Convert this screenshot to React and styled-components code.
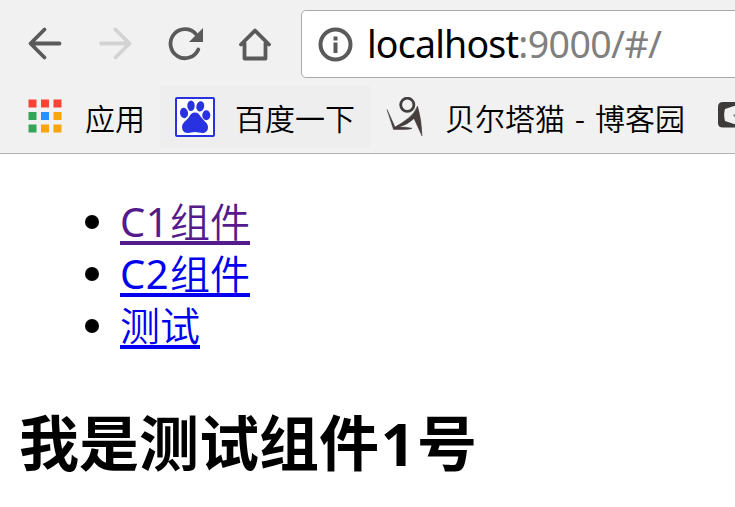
import React from "react";
import styled, { createGlobalStyle } from "styled-components";

const sans = `"Noto Sans", "Noto Sans CJK SC", sans-serif`;
const demiLight = `"Noto Sans CJK SC DemiLight", "Noto Sans CJK SC", sans-serif`;

const GlobalStyle = createGlobalStyle`
  * { box-sizing: border-box; }
  body { margin: 0; background: #fff; overflow: hidden; }
`;

const Browser = styled.div`
  width: 100%;
  height: 507px;
  overflow: hidden;
  font-family: ${sans};
  color: #000;
`;

const Chrome = styled.header`
  height: 154px;
  background: #f1f1f1;
  border-bottom: 1px solid #b6b6b6;
  overflow: hidden;
`;

const Toolbar = styled.div`
  display: flex;
  align-items: flex-start;
  height: 85px;
  padding: 10px 0 0 10px;
`;

const NavButton = styled.button`
  flex: none;
  width: 70px;
  height: 68px;
  padding: 0;
  border: 0;
  background: none;
  color: ${(p) => (p.disabled ? "#d3d3d3" : "#5a5a5a")};
  svg { display: block; }
`;

const AddressBar = styled.div`
  flex: none;
  display: flex;
  align-items: center;
  width: 460px;
  height: 68px;
  margin-left: 11px;
  padding-left: 15px;
  border: 1px solid #a9a9a9;
  border-radius: 5px;
  background: #fff;
`;

const Url = styled.div`
  margin-left: 14px;
  font-size: 37.5px;
  line-height: 66px;
  white-space: nowrap;
`;

const Host = styled.span`
  letter-spacing: -0.8px;
`;

const Path = styled.span`
  color: #808080;
  letter-spacing: -0.6px;
`;

const Bookmarks = styled.nav`
  display: flex;
  height: 63px;
`;

const Bookmark = styled.a`
  flex: none;
  display: flex;
  align-items: center;
  width: ${(p) => p.$width}px;
  height: 63px;
  padding-left: ${(p) => p.$pad || 15}px;
  background: ${(p) => (p.$active ? "#eeeeee" : "transparent")};
  svg { flex: none; }
`;

const BookmarkLabel = styled.span`
  margin-left: 20px;
  font-family: ${demiLight};
  font-size: 30px;
  font-weight: 350;
  line-height: 60px;
  white-space: pre;
`;

const Dash = styled.span`
  display: inline-block;
  width: 30px;
  text-align: center;
`;

const Page = styled.main`
  padding: 42px 20px 0 19px;
`;

const Links = styled.ul`
  margin: 0;
  padding: 0 0 0 53px;
  list-style: none;
`;

const LinkItem = styled.li`
  display: flex;
  align-items: center;
  height: 52px;
`;

const Bullet = styled.span`
  width: 14px;
  height: 14px;
  margin: 0 21px 0 13px;
  border-radius: 50%;
  background: #000;
`;

const PageLink = styled.a`
  height: 46px;
  border-bottom: 4px solid;
  color: ${(p) => (p.$visited ? "#551a8b" : "#0000ee")};
  font-family: ${demiLight};
  font-size: 40px;
  font-weight: 350;
  line-height: 42px;
  text-decoration: none;
  white-space: nowrap;
`;

const Latin = styled.span`
  display: inline-block;
  width: 50px;
  font-family: ${sans};
  font-weight: 400;
  letter-spacing: 0.4px;
`;

const Heading = styled.h2`
  margin: 51px 0 0;
  font-size: 60px;
  font-weight: 700;
  line-height: 80px;
  white-space: nowrap;
`;

const Numeral = styled.span`
  display: inline-block;
  width: 38px;
  text-align: center;
`;

const stroke = { fill: "none", stroke: "currentColor", strokeWidth: 3.8, strokeLinecap: "round", strokeLinejoin: "round" };

const BackIcon = () => (
  <svg width="70" height="68" viewBox="10 10 70 68" {...stroke}>
    <path d="M59.5 43.5H31M44.5 29.5l-14 14 14 14" />
  </svg>
);

const ForwardIcon = () => (
  <svg width="70" height="68" viewBox="80 10 70 68" {...stroke}>
    <path d="M101 43.5h28.5M115.5 29.5l14 14-14 14" />
  </svg>
);

const ReloadIcon = () => (
  <svg width="70" height="68" viewBox="150 10 70 68" {...stroke}>
    <path d="M198.3 49.5a14.5 14.5 0 1 1-2.5-15.500" />
    <path d="M203 28v14h-14z" fill="currentColor" stroke="none" />
  </svg>
);

const HomeIcon = () => (
  <svg width="70" height="68" viewBox="220 10 70 68" {...stroke}>
    <path d="M241 44.500l14-14 14 14M244.500 43v15.500h21V43" />
  </svg>
);

const InfoIcon = () => (
  <svg width="36" height="36" viewBox="0 0 36 36">
    <circle cx="18.5" cy="18.5" r="15" fill="none" stroke="#5a5a5a" strokeWidth="4" />
    <path d="M16.5 10.500h4v4h-4zM16.500 16.500h4v10.500h-4z" fill="#5a5a5a" />
  </svg>
);

const appColors = ["#fb4335", "#fb4335", "#fb4335", "#34a457", "#2a90fc", "#f7a60b", "#34a457", "#f7a60b", "#f7a60b"];

const AppsIcon = () => (
  <svg width="37" height="36" viewBox="0 0 37 36">
    {appColors.map((c, i) => (
      <rect key={i} x={0.5 + (i % 3) * 12.5} y={0.5 + Math.floor(i / 3) * 12.5} width="8" height="8" fill={c} />
    ))}
  </svg>
);

const PawIcon = () => (
  <svg width="40" height="40" viewBox="0 0 40 40">
    <rect x="1" y="1" width="38" height="38" rx="1" fill="#fff" stroke="#2932e1" strokeWidth="2" />
    <g fill="#2932e1">
      <ellipse cx="9" cy="16" rx="4" ry="5.2" transform="rotate(-8 9 16)" />
      <ellipse cx="16" cy="8.8" rx="3.7" ry="5.2" />
      <ellipse cx="25.3" cy="9.3" rx="3.9" ry="5.2" transform="rotate(12 25.3 9.3)" />
      <ellipse cx="31.3" cy="18.3" rx="4" ry="5" />
      <path d="M20 15.5c-3 0-4.500 2-6 4.500-2 3.200-7 5.500-7 10 0 3 2 6 5.500 6 3 0 5-1 7.500-1s4.500 1 7.500 1c3.500 0 5.500-2.500 5.500-6 0-4-4.500-6.300-7-10-1.700-2.500-3-4.500-6-4.500z" />
    </g>
  </svg>
);

const BlogIcon = () => (
  <svg width="40" height="40" viewBox="0 0 40 40">
    <circle cx="22.3" cy="7.8" r="6.6" fill="none" stroke="#443f3e" strokeWidth="2.8" />
    <path d="M2 12.500l6.500 20h12q6-.3 6.500-1.300-6-1.200-13-1.200 9-2.500 15-8.500l8 17.500Q36.500 22 32.500 9q-3 7.500-9.500 12.500t-13 8.500Q5.500 20 2 12.500z" fill="#443f3e" stroke="#443f3e" strokeWidth="0.5" />
  </svg>
);

const CIcon = () => (
  <svg width="40" height="40" viewBox="0 0 40 40">
    <path d="M40 5H8Q3 5 3 10v16q0 4.500 5 4.500h32v-3.500H19L10 24Q8.300 18 10 12l9-3h21z" fill="#3c3b3a" />
    <path d="M18 18.500l3-2.500v5z" fill="#8a8a8a" />
  </svg>
);

export default function App() {
  return (
    <Browser>
      <GlobalStyle />
      <Chrome>
        <Toolbar>
          <NavButton aria-label="Back"><BackIcon /></NavButton>
          <NavButton aria-label="Forward" disabled><ForwardIcon /></NavButton>
          <NavButton aria-label="Reload"><ReloadIcon /></NavButton>
          <NavButton aria-label="Home"><HomeIcon /></NavButton>
          <AddressBar>
            <InfoIcon />
            <Url><Host>localhost</Host><Path>:9000/#/</Path></Url>
          </AddressBar>
        </Toolbar>
        <Bookmarks>
          <Bookmark $width={160} $pad={28}><AppsIcon /><BookmarkLabel>应用</BookmarkLabel></Bookmark>
          <Bookmark $width={210} $active><PawIcon /><BookmarkLabel>百度一下</BookmarkLabel></Bookmark>
          <Bookmark $width={345}><BlogIcon /><BookmarkLabel>贝尔塔猫<Dash>-</Dash>博客园</BookmarkLabel></Bookmark>
          <Bookmark $width={70} $pad={0.1}><CIcon /></Bookmark>
        </Bookmarks>
      </Chrome>
      <Page>
        <Links>
          <LinkItem><Bullet /><PageLink $visited><Latin>C1</Latin>组件</PageLink></LinkItem>
          <LinkItem><Bullet /><PageLink><Latin>C2</Latin>组件</PageLink></LinkItem>
          <LinkItem><Bullet /><PageLink>测试</PageLink></LinkItem>
        </Links>
        <Heading>我是测试组件<Numeral>1</Numeral>号</Heading>
      </Page>
    </Browser>
  );
}
